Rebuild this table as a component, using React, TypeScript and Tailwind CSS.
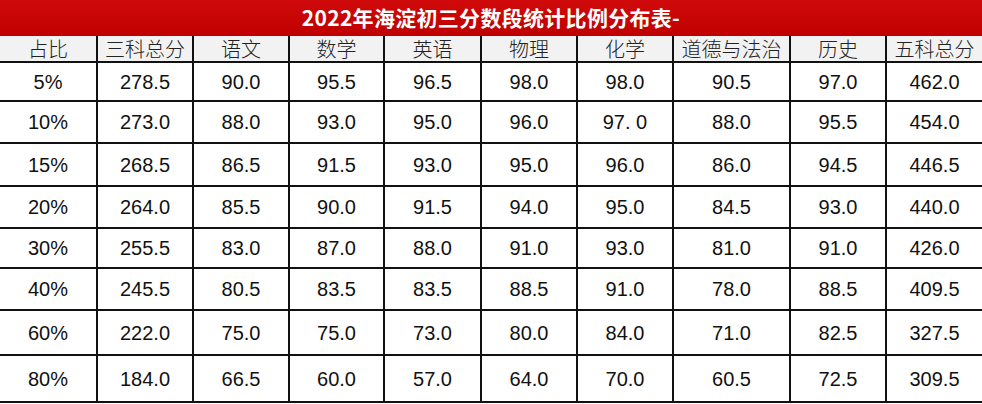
const headers = ["占比", "三科总分", "语文", "数学", "英语", "物理", "化学", "道德与法治", "历史", "五科总分"]

const rows = [
  ["5%", "278.5", "90.0", "95.5", "96.5", "98.0", "98.0", "90.5", "97.0", "462.0"],
  ["10%", "273.0", "88.0", "93.0", "95.0", "96.0", "97. 0", "88.0", "95.5", "454.0"],
  ["15%", "268.5", "86.5", "91.5", "93.0", "95.0", "96.0", "86.0", "94.5", "446.5"],
  ["20%", "264.0", "85.5", "90.0", "91.5", "94.0", "95.0", "84.5", "93.0", "440.0"],
  ["30%", "255.5", "83.0", "87.0", "88.0", "91.0", "93.0", "81.0", "91.0", "426.0"],
  ["40%", "245.5", "80.5", "83.5", "83.5", "88.5", "91.0", "78.0", "88.5", "409.5"],
  ["60%", "222.0", "75.0", "75.0", "73.0", "80.0", "84.0", "71.0", "82.5", "327.5"],
  ["80%", "184.0", "66.5", "60.0", "57.0", "64.0", "70.0", "60.5", "72.5", "309.5"],
]

export default function App() {
  return (
    <div className="w-[982px] h-[404px] bg-white overflow-hidden">
      {/* Title */}
      <div className="h-[36px] bg-gradient-to-b from-[#d00a0a] to-[#c00000] flex items-center justify-center">
        <span className="text-white font-bold text-[21px] tracking-[0.3px] font-['Noto_Sans_CJK_SC','Noto_Sans',sans-serif]">
          2022年海淀初三分数段统计比例分布表-
        </span>
      </div>

      {/* Table */}
      <div className="grid bg-[#111] gap-[2px] border-b-2 border-[#111] grid-cols-[96px_94px_94px_93px_95px_94px_94px_115px_94px_95px] grid-rows-[25px_37px_40px_41px_40px_38px_40px_43px_45px]">
        {headers.map((h) => (
          <div
            key={h}
            className="bg-[#f2f2f2] flex items-center justify-center text-[20px] leading-none text-[#222] font-light font-['Noto_Sans_CJK_SC',sans-serif]"
          >
            {h}
          </div>
        ))}
        {rows.map((row, r) =>
          row.map((cell, c) => (
            <div
              key={`${r}-${c}`}
              className="bg-white flex items-center justify-center text-[20px] leading-none text-[#111] font-['Liberation_Sans',Arial,sans-serif] whitespace-pre"
            >
              {cell}
            </div>
          ))
        )}
      </div>
    </div>
  )
}
